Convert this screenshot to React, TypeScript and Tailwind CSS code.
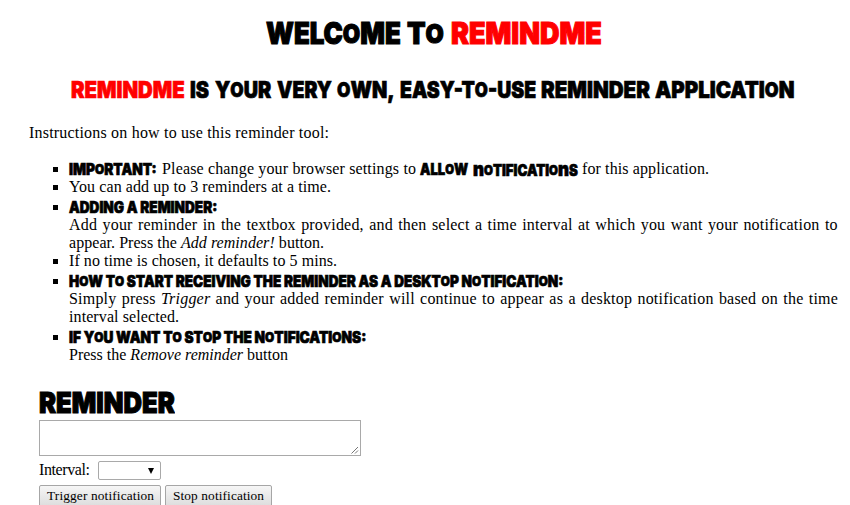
import { useLayoutEffect, useRef, type ReactNode } from 'react';

/** Tracks its text so that it fills the width given in className. */
function Fit({ className, children }: { className: string; children: ReactNode }) {
  const box = useRef<HTMLSpanElement>(null);
  const text = useRef<HTMLSpanElement>(null);
  useLayoutEffect(() => {
    const b = box.current;
    const t = text.current;
    if (!b || !t) return;
    t.style.letterSpacing = '0px';
    const count = Math.max(1, (t.textContent ?? '').length - 1);
    const spacing = (b.clientWidth - t.getBoundingClientRect().width) / count;
    t.style.letterSpacing = `${spacing}px`;
  }, []);
  return (
    <span ref={box} className={`block shrink-0 whitespace-nowrap ${className}`}>
      <span ref={text}>{children}</span>
    </span>
  );
}

/** Condenses display text to the width given in className; each O is small and raised, each n is tall. */
function Squeeze({ className, children }: { className: string; children: string }) {
  const box = useRef<HTMLSpanElement>(null);
  const text = useRef<HTMLSpanElement>(null);
  useLayoutEffect(() => {
    const b = box.current;
    const t = text.current;
    if (!b || !t) return;
    t.style.transform = `scaleX(${b.clientWidth / t.offsetWidth})`;
  }, []);
  return (
    <span ref={box} className={`block shrink-0 whitespace-nowrap ${className}`}>
      <span ref={text} className="inline-block origin-left">
        {children.split(/([On])/).map((part, i) => {
          if (part === 'O')
            return (
              <span key={i} className="relative -top-[0.05em] text-[0.87em] leading-none">
                O
              </span>
            );
          if (part === 'n')
            return (
              <span key={i} className="text-[1.28em] leading-none">
                n
              </span>
            );
          return part;
        })}
      </span>
    </span>
  );
}

const display = "font-['Inter',sans-serif] font-black";

function Item({ strong, children }: { strong?: boolean; children: ReactNode }) {
  return (
    <li className={`relative ${strong ? 'pt-[2px]' : ''}`}>
      <span className={`absolute -left-4 size-[5px] bg-black ${strong ? 'top-[9px]' : 'top-[7px]'}`} />
      {children}
    </li>
  );
}

function Strong({ children }: { children: ReactNode }) {
  return (
    <div className={`${display} flex h-[18px] gap-[5px] text-[15.5px] leading-[19px] [-webkit-text-stroke:0.7px_black]`}>
      {children}
    </div>
  );
}

function Button({ className, children }: { className: string; children: ReactNode }) {
  return (
    <button
      className={`h-[22px] rounded-[2px] border border-[#a6a6a6] bg-linear-to-b from-[#f6f6f6] to-[#dddddd] pl-[7px] text-left text-[13.33px] leading-[20px] ${className}`}
    >
      {children}
    </button>
  );
}

export default function App() {
  return (
    <main className="h-[505px] w-[850px] overflow-hidden bg-white font-['Liberation_Serif',serif] text-[16px] leading-[18px] text-black">
      <h1 className={`${display} flex h-[66px] pt-[13px] pl-[266px] text-[30px] leading-[40px] [-webkit-text-stroke:1.1px]`}>
        <Squeeze className="w-[135px]">WELCOME</Squeeze>
        <Squeeze className="ml-[6px] w-[37px]">TO</Squeeze>
        <Squeeze className="ml-[7px] w-[151px] text-[#ff0000]">REMINDME</Squeeze>
      </h1>
      <h2 className={`${display} flex h-[58px] pt-[9px] pl-[71px] text-[23px] leading-[30px] [-webkit-text-stroke:0.7px]`}>
        <Squeeze className="w-[114px] text-[#ff0000]">REMINDME</Squeeze>
        <Squeeze className="ml-[5px] w-[19px]">IS</Squeeze>
        <Squeeze className="ml-[6px] w-[56px]">YOUR</Squeeze>
        <Squeeze className="ml-[6px] w-[55px]">VERY</Squeeze>
        <Squeeze className="ml-[5px] w-[58px]">OWN,</Squeeze>
        <Squeeze className="ml-[5px] w-[136px]">EASY-TO-USE</Squeeze>
        <Squeeze className="ml-[5px] w-[109px]">REMINDER</Squeeze>
        <Squeeze className="ml-[5px] w-[139px]">APPLICATION</Squeeze>
      </h2>
      <p className="h-[34px] pl-[29px]">
        <Fit className="w-[300px]">Instructions on how to use this reminder tool:</Fit>
      </p>
      <ul className="h-[230px] w-[838px] pl-[69px]">
        <Item strong>
          <div className="flex h-[18px]">
            <Strong>
              <Squeeze className="w-[88px]">IMPORTANT:</Squeeze>
            </Strong>
            <Fit className="ml-[5px] w-[254px]">Please change your browser settings to</Fit>
            <span className="w-1" />
            <Strong>
              <Squeeze className="w-[48px]">ALLOW</Squeeze>
              <Squeeze className="w-[105px]">nOTIFICATIOnS</Squeeze>
            </Strong>
            <Fit className="ml-[4px] w-[127px]">for this application.</Fit>
          </div>
        </Item>
        <Item>
          <Fit className="w-[262px]">You can add up to 3 reminders at a time.</Fit>
        </Item>
        <Item strong>
          <Strong>
            <Squeeze className="w-[148px]">ADDING A REMINDER:</Squeeze>
          </Strong>
          <div className="flex justify-between tracking-[0.2px]">
            {'Add your reminder in the textbox provided, and then select a time interval at which you want your notification to'
              .split(' ')
              .map((word, i) => (
                <span key={i}>{word}</span>
              ))}
          </div>
          <Fit className="w-[255px]">
            appear. Press the <i>Add reminder!</i> button.
          </Fit>
        </Item>
        <Item>
          <Fit className="w-[268px]">If no time is chosen, it defaults to 5 mins.</Fit>
        </Item>
        <Item strong>
          <Strong>
            <Squeeze className="w-[494px]">HOW TO START RECEIVING THE REMINDER AS A DESKTOP NOTIFICATION:</Squeeze>
          </Strong>
          <div className="flex justify-between tracking-[0.2px]">
            {'Simply press Trigger and your added reminder will continue to appear as a desktop notification based on the time'
              .split(' ')
              .map((word, i) => (
                <span key={i} className={word === 'Trigger' ? 'italic' : ''}>
                  {word}
                </span>
              ))}
          </div>
          <Fit className="w-[110px]">interval selected.</Fit>
        </Item>
        <Item strong>
          <Strong>
            <Squeeze className="w-[297px]">IF YOU WANT TO STOP THE NOTIFICATIONS:</Squeeze>
          </Strong>
          <Fit className="w-[219px]">
            Press the <i>Remove reminder</i> button
          </Fit>
        </Item>
      </ul>
      <form className="pl-[39px]">
        <h3 className={`${display} h-[32px] text-[29px] leading-[30px] [-webkit-text-stroke:1.1px]`}>
          <Squeeze className="w-[136px]">REMINDER</Squeeze>
        </h3>
        <div className="flex h-[36px] w-[322px] items-end justify-end border border-[#a9a9a9] p-px">
          <svg width="8" height="8" viewBox="0 0 8 8" stroke="#666" strokeWidth="0.9" fill="none">
            <path d="M0.5 7.5L7 1M4 7.5L7 4.5" />
          </svg>
        </div>
        <div className="mt-[5px] flex h-[19px]">
          <Fit className="w-[51px]">Interval:</Fit>
          <div className="ml-2 flex w-[63px] items-center justify-end rounded-[2px] border border-[#a9a9a9] pr-[6px]">
            <svg width="6" height="6" viewBox="0 0 6 6">
              <path d="M0 0h6L3 6z" />
            </svg>
          </div>
        </div>
        <div className="mt-[5px] flex gap-1">
          <Button className="w-[122px]">
            <Fit className="w-[107px]">Trigger notification</Fit>
          </Button>
          <Button className="w-[107px]">
            <Fit className="w-[91px]">Stop notification</Fit>
          </Button>
        </div>
      </form>
    </main>
  );
}
